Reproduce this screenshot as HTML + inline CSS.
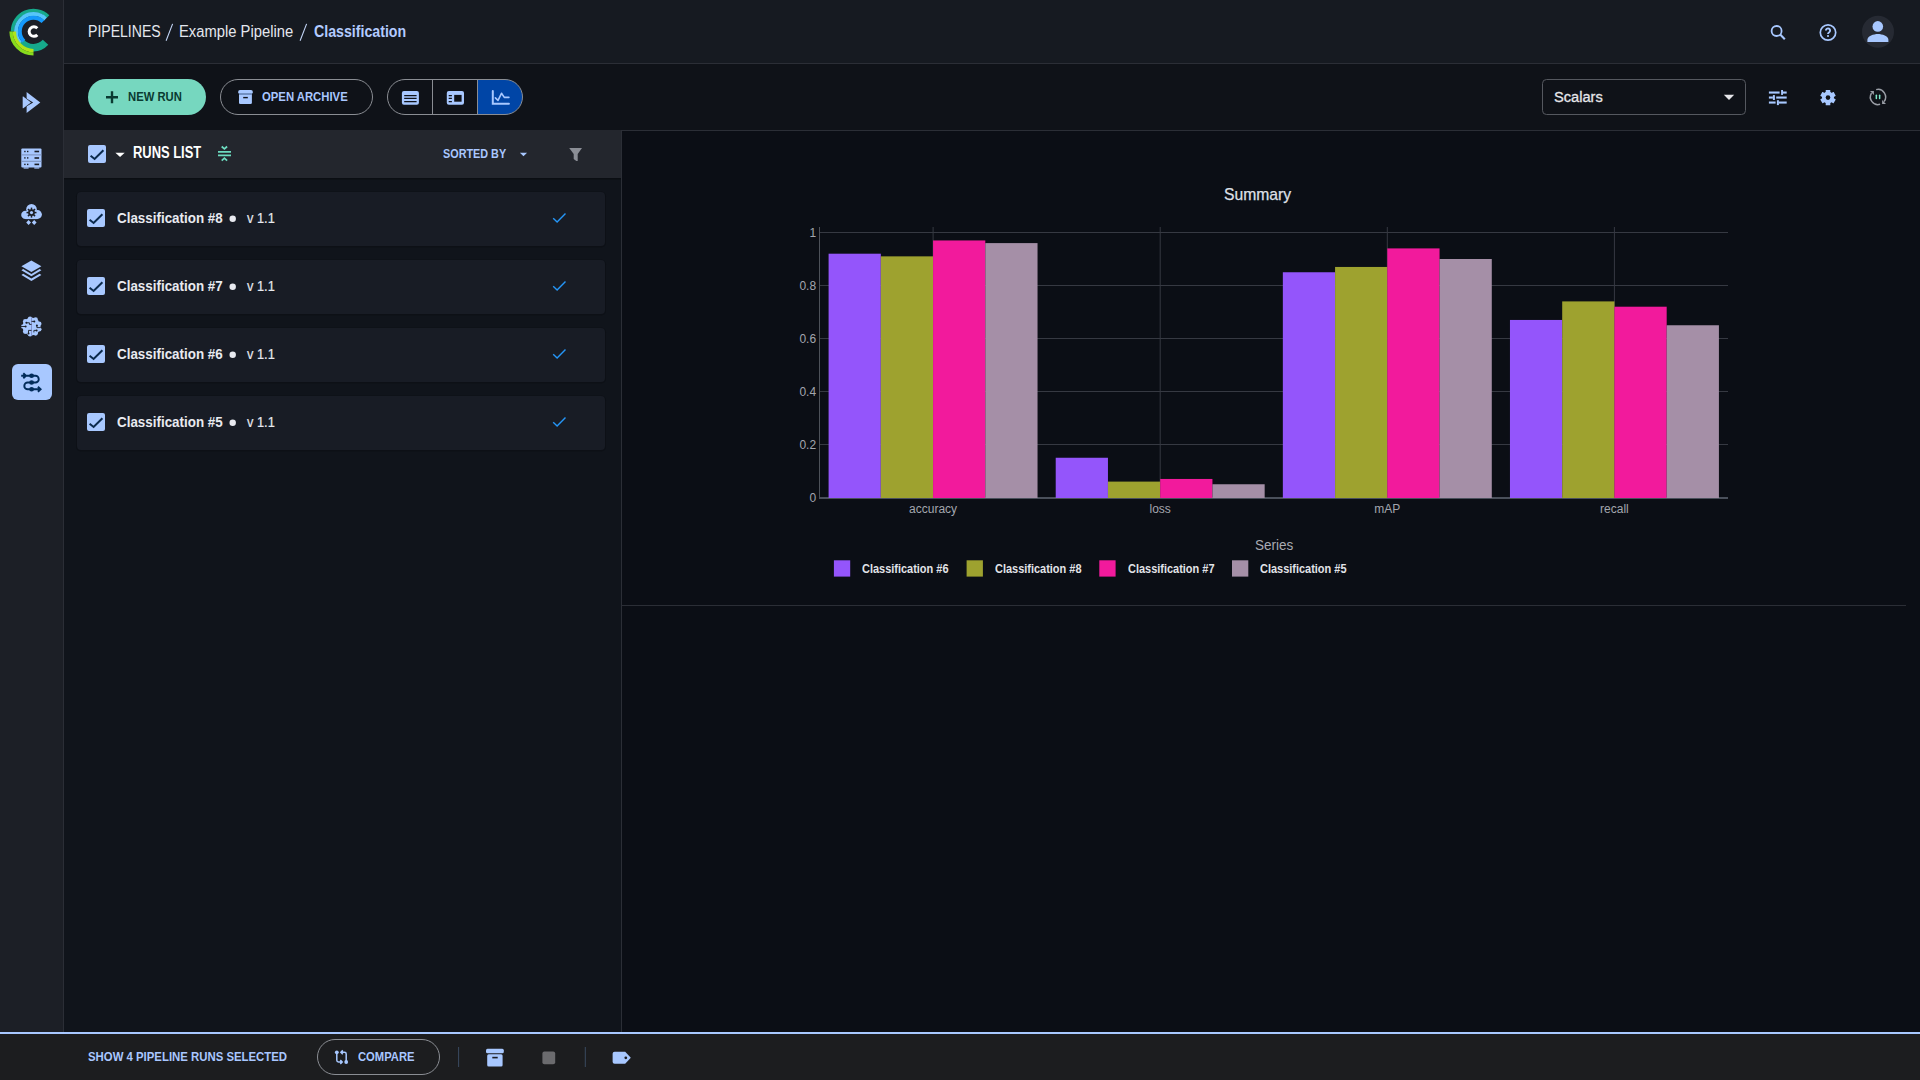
<!DOCTYPE html>
<html><head><meta charset="utf-8">
<style>
*{margin:0;padding:0;box-sizing:border-box}
html,body{width:1920px;height:1080px;overflow:hidden;background:#0b0e15;font-family:"Liberation Sans",sans-serif;}
.abs{position:absolute}
.t{position:absolute;white-space:nowrap;line-height:1;transform-origin:0 0}
#side{left:0;top:0;width:63px;height:1032px;background:#1c1f26}
#sideb{left:63px;top:0;width:1px;height:1032px;background:#2b2e36}
#top{left:64px;top:0;width:1856px;height:63px;background:#161a21}
#topb{left:64px;top:63px;width:1856px;height:1px;background:#2b2e36}
#tool{left:64px;top:64px;width:1856px;height:66px;background:#0f1218}
#runhdr{left:64px;top:130px;width:557px;height:48px;background:#23262d}
#list{left:64px;top:178px;width:557px;height:854px;background:#10141b}
#vsep{left:621px;top:130px;width:1px;height:902px;background:#2b2e36}
#rtop{left:622px;top:130px;width:1298px;height:1px;background:#2b2e36}
#plot{left:622px;top:131px;width:1298px;height:901px;background:#0b0e15}
#bline{left:0;top:1032px;width:1920px;height:2px;background:#a8c8ff}
#bottom{left:0;top:1034px;width:1920px;height:46px;background:#1c1d1f}
svg.ov{position:absolute;left:0;top:0}
</style></head><body>
<div id="side" class="abs"></div><div id="sideb" class="abs"></div>
<div id="top" class="abs"></div><div id="topb" class="abs"></div>
<div id="tool" class="abs"></div>
<div id="runhdr" class="abs"></div>
<div id="list" class="abs"></div>
<div id="vsep" class="abs"></div>
<div id="rtop" class="abs"></div>
<div id="plot" class="abs"></div>
<div id="bline" class="abs"></div>
<div id="bottom" class="abs"></div>
<svg class="ov" width="1920" height="1080" viewBox="0 0 1920 1080">
<path d="M45.54 42.34A16.2 16.2 0 0 1 21.09 41.91" stroke="#16a98b" stroke-width="7.4" fill="none"/>
<path d="M48.09 16.39A21.0 21.0 0 0 0 12.50 31.50" stroke="#16a98b" stroke-width="3.5" fill="none"/>
<path d="M45.59 18.98A17.4 17.4 0 0 0 20.37 42.92" stroke="#56c6f8" stroke-width="3.9" fill="none"/>
<path d="M42.95 21.72A13.6 13.6 0 0 0 23.88 41.12" stroke="#1599fb" stroke-width="3.9" fill="none"/>
<path d="M33.50 53.90A22.4 22.4 0 0 1 11.10 31.50" stroke="#88dc1d" stroke-width="3.4" fill="none"/>
<path d="M33.50 50.60A19.1 19.1 0 0 1 14.40 31.50" stroke="#b0e41a" stroke-width="3.3" fill="none"/>
<path d="M37.3 28.3A4.75 4.75 0 1 0 37.3 34.9" stroke="#ffffff" stroke-width="3" fill="none"/>
<path d="M26.6 92.1L40.3 102.4L26.6 112.9Z" fill="#a8c8ff"/>
<path d="M21.2 95.2L33.2 102.4L21.2 109.6Z" fill="#1c1f26"/>
<path d="M22.7 96.8Q22.7 96.2 23.3 96.6L31 102.4L23.3 108.2Q22.7 108.6 22.7 108Z" fill="#a8c8ff"/>
<rect x="21.3" y="148.4" width="20.2" height="19.2" rx="1" fill="#a8c8ff"/>
<path d="M21.3 154.9h20.2M21.3 161.3h20.2" stroke="#7a90b8" stroke-width="1"/>
<rect x="24.2" y="150.8" width="1.4" height="1.4" fill="#1c1f26"/><rect x="27" y="150.8" width="1.4" height="1.4" fill="#1c1f26"/><rect x="34.5" y="150.7" width="4.6" height="1.6" fill="#1c1f26"/>
<rect x="24.2" y="157.2" width="1.4" height="1.4" fill="#1c1f26"/><rect x="27" y="157.2" width="1.4" height="1.4" fill="#1c1f26"/><rect x="34.5" y="157.2" width="4.6" height="1.6" fill="#1c1f26"/>
<rect x="24.2" y="163.7" width="1.4" height="1.4" fill="#1c1f26"/><rect x="27" y="163.7" width="1.4" height="1.4" fill="#1c1f26"/><rect x="34.5" y="163.6" width="4.6" height="1.6" fill="#1c1f26"/>
<rect x="23.6" y="167.4" width="5" height="1.2" fill="#a8c8ff"/><rect x="34.3" y="167.4" width="5" height="1.2" fill="#a8c8ff"/>
<g fill="#a8c8ff"><circle cx="31.5" cy="209.3" r="5.3"/><circle cx="25.4" cy="214.9" r="4.2"/><circle cx="37.5" cy="214.5" r="4.4"/><rect x="25.4" y="213.5" width="12.1" height="5.6"/></g>
<g transform="translate(31.5 212.6)" fill="#1c1f26"><rect x="-0.75" y="-5" width="1.5" height="2.4" transform="rotate(0)"/><rect x="-0.75" y="-5" width="1.5" height="2.4" transform="rotate(45)"/><rect x="-0.75" y="-5" width="1.5" height="2.4" transform="rotate(90)"/><rect x="-0.75" y="-5" width="1.5" height="2.4" transform="rotate(135)"/><rect x="-0.75" y="-5" width="1.5" height="2.4" transform="rotate(180)"/><rect x="-0.75" y="-5" width="1.5" height="2.4" transform="rotate(225)"/><rect x="-0.75" y="-5" width="1.5" height="2.4" transform="rotate(270)"/><rect x="-0.75" y="-5" width="1.5" height="2.4" transform="rotate(315)"/><circle r="3.4"/><circle r="1.6" fill="#a8c8ff"/></g>
<path d="M28.6 220.1L31 222.5L28.6 224.9L26.2 222.5ZM34.2 220.1L36.6 222.5L34.2 224.9L31.8 222.5Z" fill="#a8c8ff"/>
<path d="M31.4 260.5L41.4 266.3L31.4 272.1L21.4 266.3Z" fill="#a8c8ff"/>
<path d="M21.4 270.2L23.2 269.1L31.4 273.9L39.6 269.1L41.4 270.2L31.4 276.2Z" fill="#a8c8ff"/>
<path d="M21.4 274.9L23.2 273.8L31.4 278.6L39.6 273.8L41.4 274.9L31.4 280.9Z" fill="#a8c8ff"/>
<ellipse cx="31.5" cy="326.5" rx="9" ry="9" fill="#a8c8ff"/>
<circle cx="39.21" cy="329.20" r="2.3" fill="#a8c8ff"/>
<circle cx="35.60" cy="333.34" r="2.3" fill="#a8c8ff"/>
<circle cx="30.08" cy="334.28" r="2.3" fill="#a8c8ff"/>
<circle cx="25.22" cy="331.58" r="2.3" fill="#a8c8ff"/>
<circle cx="23.30" cy="326.50" r="2.3" fill="#a8c8ff"/>
<circle cx="25.22" cy="321.42" r="2.3" fill="#a8c8ff"/>
<circle cx="30.08" cy="318.72" r="2.3" fill="#a8c8ff"/>
<circle cx="35.60" cy="319.66" r="2.3" fill="#a8c8ff"/>
<circle cx="39.21" cy="323.80" r="2.3" fill="#a8c8ff"/>
<path d="M31.5 317.2V336" stroke="#7c86c4" stroke-width="0.8"/>
<path d="M21 326.5H25.6M26.4 322.8H29.4V324.4H31.5M28.5 333.5V330.4H31.5M31.5 321.4H34.3M36.9 325.4V327.6H40.8M33.9 332.4V330.4H36.6" stroke="#1c1f26" stroke-width="0.9" fill="none"/>
<g fill="#1c1f26"><circle cx="25.6" cy="326.5" r="1"/><circle cx="26.4" cy="322.8" r="1"/><circle cx="28.5" cy="333.5" r="1"/><circle cx="34.3" cy="321.4" r="1"/><circle cx="36.9" cy="325.4" r="1"/><circle cx="36.6" cy="330.4" r="1"/></g>
<rect x="12" y="364" width="40" height="36" rx="6" fill="#a8c8ff"/>
<path d="M21.2 375.8H35.4A3.35 3.35 0 0 1 35.4 382.5H27.7A3.4 3.4 0 0 0 27.7 389.3H40.8M23.3 373.3L26 375.8L23.3 378.3M37.9 386.8L40.6 389.3L37.9 391.8" stroke="#022c5a" stroke-width="1.9" fill="none"/>
<ellipse cx="31.6" cy="375.8" rx="2.4" ry="2.2" fill="#022c5a"/><ellipse cx="31.6" cy="382.5" rx="2.4" ry="2.2" fill="#022c5a"/><ellipse cx="31.6" cy="389.3" rx="2.4" ry="2.2" fill="#022c5a"/>
<path d="M172.6 23.9L166.1 40.7M306.6 23.9L300.1 40.7" stroke="#c2d4f5" stroke-width="1.1"/>
<circle cx="1776.6" cy="31" r="5" fill="none" stroke="#a8c8ff" stroke-width="1.8"/><path d="M1780.2 34.6L1784.8 39.2" stroke="#a8c8ff" stroke-width="2.1"/>
<circle cx="1828" cy="32.5" r="7.7" fill="none" stroke="#a8c8ff" stroke-width="1.7"/>
<path d="M1825.9 30.5a2.1 2.1 0 1 1 3.3 1.7c-.8.5-1.2.9-1.2 1.8" stroke="#a8c8ff" stroke-width="1.9" fill="none"/><circle cx="1828" cy="36" r="1.1" fill="#a8c8ff"/>
<circle cx="1878" cy="31.7" r="16" fill="#262a33"/>
<circle cx="1877.8" cy="26.4" r="5.3" fill="#a8c8ff"/><path d="M1867.4 41.9v-2.2c0-3.7 6.3-5.8 10.5-5.8s10.5 2.1 10.5 5.8v2.2z" fill="#a8c8ff"/>
<rect x="88" y="79" width="118" height="36" rx="18" fill="#76d7bf"/>
<path d="M106 97.2h12M112 91.2v12" stroke="#0a3a31" stroke-width="2.4"/>
<rect x="220.5" y="79.5" width="152" height="35" rx="17.5" fill="none" stroke="#8a8d93" stroke-width="1"/>
<rect x="239" y="92" width="12.9" height="12.1" rx="1.3" fill="#a8c8ff"/><rect x="238.2" y="89.9" width="14.6" height="4.2" rx="1.8" fill="#a8c8ff"/><rect x="239" y="93.3" width="12.9" height="1.4" fill="#5b78a8"/><path d="M243.2 97.6h4.6" stroke="#0f1218" stroke-width="1.4"/>
<path d="M478 79.5H505A17.5 17.5 0 0 1 505 114.5H478Z" fill="#0045a6"/>
<rect x="387.5" y="79.5" width="135" height="35" rx="17.5" fill="none" stroke="#8a8d93" stroke-width="1"/>
<path d="M432.5 79.5v35M477.5 79.5v35" stroke="#8a8d93" stroke-width="1"/>
<rect x="401.9" y="91" width="17" height="13.8" rx="2" fill="#a8c8ff"/><path d="M404.2 95.6h12.4M404.2 98.4h12.4M404.2 101.6h12.4" stroke="#0f1218" stroke-width="1.2"/>
<rect x="446.8" y="91" width="17.2" height="13.8" rx="2" fill="#a8c8ff"/><rect x="454.2" y="94.9" width="7.4" height="6.8" fill="#0f1218"/><path d="M448.7 95.6h3.2M448.7 98.4h3.2M448.7 101.6h3.2" stroke="#0f1218" stroke-width="1.2"/>
<path d="M492.8 91v12.8h16.1" stroke="#a8c8ff" stroke-width="2" fill="none" stroke-linecap="round"/><path d="M495.4 97.9l2.6 2.5l3.5-7.1l2.8 4.1h4.6" stroke="#a8c8ff" stroke-width="1.6" fill="none" stroke-linecap="round" stroke-linejoin="round"/>
<rect x="1542.5" y="79.5" width="203" height="35" rx="4" fill="none" stroke="#55585f" stroke-width="1"/>
<path d="M1723.8 94.8h10.4l-5.2 5.2z" fill="#e6e6ea"/>
<g fill="#a8c8ff"><rect x="1768.9" y="91.5" width="10.7" height="2.1"/><rect x="1781.1" y="90" width="1.9" height="4.9"/><rect x="1782.9" y="91.5" width="3.8" height="2.1"/><rect x="1768.9" y="96.5" width="4" height="2.1"/><rect x="1772.9" y="95.1" width="2" height="4.9"/><rect x="1776.2" y="96.5" width="10.5" height="2.1"/><rect x="1768.9" y="101.5" width="6.7" height="2.1"/><rect x="1776.9" y="100.2" width="2" height="4.9"/><rect x="1778.9" y="101.5" width="7.8" height="2.1"/></g>
<g transform="translate(1828 97.6)"><rect x="-2.3" y="-7.7" width="4.6" height="3.2" rx="0.4" transform="rotate(0) " fill="#a8c8ff"/><rect x="-2.3" y="-7.7" width="4.6" height="3.2" rx="0.4" transform="rotate(60) " fill="#a8c8ff"/><rect x="-2.3" y="-7.7" width="4.6" height="3.2" rx="0.4" transform="rotate(120) " fill="#a8c8ff"/><rect x="-2.3" y="-7.7" width="4.6" height="3.2" rx="0.4" transform="rotate(180) " fill="#a8c8ff"/><rect x="-2.3" y="-7.7" width="4.6" height="3.2" rx="0.4" transform="rotate(240) " fill="#a8c8ff"/><rect x="-2.3" y="-7.7" width="4.6" height="3.2" rx="0.4" transform="rotate(300) " fill="#a8c8ff"/><circle r="6.0" fill="#a8c8ff"/><circle r="2.3" fill="#0f1218"/></g>
<path d="M1876.16 89.63A7.6 7.6 0 0 1 1884.07 101.57" stroke="#9a9ea6" stroke-width="1.5" fill="none"/>
<path d="M1880.09 104.31A7.6 7.6 0 0 1 1871.49 93.09" stroke="#9a9ea6" stroke-width="1.5" fill="none"/>
<path d="M1870 91H1873.9V94.9Z M1886 103.9H1882.1V100Z" fill="#9a9ea6"/>
<rect x="1875.6" y="94.6" width="1.5" height="4.6" rx=".7" fill="#7ee6c8"/><rect x="1878.9" y="94.6" width="1.5" height="4.6" rx=".7" fill="#7ee6c8"/>
<rect x="88" y="145" width="18" height="18" rx="2" fill="#a8c8ff"/><path d="M90.6 155.8l4 3.2l8.8-8.8" stroke="#0b2a4c" stroke-width="2" fill="none"/>
<path d="M115.4 152.7h9.3l-4.65 4.4z" fill="#ffffff"/>
<path d="M218 151.9h13M218 155.3h13M221.7 146.5l2.7 2.4l2.7-2.4M221.7 160.6l2.7-2.4l2.7 2.4" stroke="#6ddcc0" stroke-width="1.8" fill="none"/>
<path d="M519.9 152.7h7.2l-3.6 3.6z" fill="#a8c8ff"/>
<path d="M569.2 148H582L577.7 154V161.1H576.3L573.7 158.9V154Z" fill="#8b8e96"/>
<rect x="64" y="178" width="557" height="1.5" fill="#0b0e13"/>
<rect x="76" y="191.5" width="530" height="56" rx="5" fill="#0c0f15" opacity="0.8"/>
<rect x="77" y="192" width="528" height="54" rx="4" fill="#181c25"/>
<rect x="87" y="209" width="18" height="18" rx="2" fill="#a8c8ff"/><path d="M89.6 219.8l4 3.2l8.8-8.8" stroke="#0b2a4c" stroke-width="2" fill="none"/>
<circle cx="232.7" cy="218.8" r="3.2" fill="#e8eaf0"/>
<path d="M553.2 218.2l3.9 3.8l8.4-8.6" stroke="#2596f7" stroke-width="1.4" fill="none"/>
<rect x="76" y="259.5" width="530" height="56" rx="5" fill="#0c0f15" opacity="0.8"/>
<rect x="77" y="260" width="528" height="54" rx="4" fill="#181c25"/>
<rect x="87" y="277" width="18" height="18" rx="2" fill="#a8c8ff"/><path d="M89.6 287.8l4 3.2l8.8-8.8" stroke="#0b2a4c" stroke-width="2" fill="none"/>
<circle cx="232.7" cy="286.8" r="3.2" fill="#e8eaf0"/>
<path d="M553.2 286.2l3.9 3.8l8.4-8.6" stroke="#2596f7" stroke-width="1.4" fill="none"/>
<rect x="76" y="327.5" width="530" height="56" rx="5" fill="#0c0f15" opacity="0.8"/>
<rect x="77" y="328" width="528" height="54" rx="4" fill="#181c25"/>
<rect x="87" y="345" width="18" height="18" rx="2" fill="#a8c8ff"/><path d="M89.6 355.8l4 3.2l8.8-8.8" stroke="#0b2a4c" stroke-width="2" fill="none"/>
<circle cx="232.7" cy="354.8" r="3.2" fill="#e8eaf0"/>
<path d="M553.2 354.2l3.9 3.8l8.4-8.6" stroke="#2596f7" stroke-width="1.4" fill="none"/>
<rect x="76" y="395.5" width="530" height="56" rx="5" fill="#0c0f15" opacity="0.8"/>
<rect x="77" y="396" width="528" height="54" rx="4" fill="#181c25"/>
<rect x="87" y="413" width="18" height="18" rx="2" fill="#a8c8ff"/><path d="M89.6 423.8l4 3.2l8.8-8.8" stroke="#0b2a4c" stroke-width="2" fill="none"/>
<circle cx="232.7" cy="422.8" r="3.2" fill="#e8eaf0"/>
<path d="M553.2 422.2l3.9 3.8l8.4-8.6" stroke="#2596f7" stroke-width="1.4" fill="none"/>
<path d="M819.5 444.5H1728.0" stroke="#363942" stroke-width="1"/>
<path d="M819.5 391.5H1728.0" stroke="#363942" stroke-width="1"/>
<path d="M819.5 338.5H1728.0" stroke="#363942" stroke-width="1"/>
<path d="M819.5 285.5H1728.0" stroke="#363942" stroke-width="1"/>
<path d="M819.5 232.5H1728.0" stroke="#363942" stroke-width="1"/>
<path d="M933.1 227V497" stroke="#363942" stroke-width="1"/>
<path d="M1160.2 227V497" stroke="#363942" stroke-width="1"/>
<path d="M1387.3 227V497" stroke="#363942" stroke-width="1"/>
<path d="M1614.4 227V497" stroke="#363942" stroke-width="1"/>
<path d="M819.5 227V497.5" stroke="#4d5159" stroke-width="1"/>
<path d="M819.0 498H1728.0" stroke="#4a505b" stroke-width="2"/>
<rect x="828.59" y="253.70" width="52.24" height="244.30" fill="#9455fb"/>
<rect x="880.82" y="256.35" width="52.24" height="241.65" fill="#9ea22f"/>
<rect x="933.06" y="240.45" width="52.24" height="257.55" fill="#f21a9c"/>
<rect x="985.30" y="243.10" width="52.24" height="254.90" fill="#a58fa7"/>
<rect x="1055.71" y="457.75" width="52.24" height="40.25" fill="#9455fb"/>
<rect x="1107.95" y="481.60" width="52.24" height="16.40" fill="#9ea22f"/>
<rect x="1160.19" y="478.95" width="52.24" height="19.05" fill="#f21a9c"/>
<rect x="1212.43" y="484.25" width="52.24" height="13.75" fill="#a58fa7"/>
<rect x="1282.84" y="272.25" width="52.24" height="225.75" fill="#9455fb"/>
<rect x="1335.07" y="266.95" width="52.24" height="231.05" fill="#9ea22f"/>
<rect x="1387.31" y="248.40" width="52.24" height="249.60" fill="#f21a9c"/>
<rect x="1439.55" y="259.00" width="52.24" height="239.00" fill="#a58fa7"/>
<rect x="1509.96" y="319.95" width="52.24" height="178.05" fill="#9455fb"/>
<rect x="1562.20" y="301.40" width="52.24" height="196.60" fill="#9ea22f"/>
<rect x="1614.44" y="306.70" width="52.24" height="191.30" fill="#f21a9c"/>
<rect x="1666.68" y="325.25" width="52.24" height="172.75" fill="#a58fa7"/>
<path d="M622 605.5H1906" stroke="#2b2e36" stroke-width="1"/>
<rect x="833.9" y="560.3" width="16.3" height="16.3" fill="#9455fb"/>
<rect x="966.6" y="560.3" width="16.3" height="16.3" fill="#9ea22f"/>
<rect x="1099.3" y="560.3" width="16.3" height="16.3" fill="#f21a9c"/>
<rect x="1232.0" y="560.3" width="16.3" height="16.3" fill="#a58fa7"/>
<rect x="317.5" y="1039.5" width="122" height="35" rx="17.5" fill="none" stroke="#8a8d93" stroke-width="1"/>
<path d="M336.8 1052.3V1060.3Q336.8 1062 338.5 1062H342.2M340.3 1060.1l1.9 1.9l-1.9 1.9M346.2 1062V1054Q346.2 1052.3 344.5 1052.3H340.9M342.8 1050.4l-1.9 1.9l1.9 1.9" stroke="#a8c8ff" stroke-width="1.5" fill="none"/>
<circle cx="336.8" cy="1052.3" r="1.9" fill="#a8c8ff"/><circle cx="346.2" cy="1062" r="1.9" fill="#a8c8ff"/>
<path d="M458.6 1047v20M585.3 1047v20" stroke="#3a4a60" stroke-width="1"/>
<rect x="486" y="1048.7" width="17.8" height="4.6" rx="1.5" fill="#a8c8ff"/><rect x="487.2" y="1054.2" width="15.4" height="12.2" rx="1.5" fill="#a8c8ff"/><path d="M492.3 1057.6h5.4" stroke="#1c1d20" stroke-width="1.6"/>
<rect x="542.4" y="1051.4" width="12.8" height="12.8" rx="2" fill="#6b6b6e"/>
<path d="M612.6 1053.8q0-2 2-2h10.6l5.6 6l-5.6 6h-10.6q-2 0-2-2z" fill="#a8c8ff"/><circle cx="625.8" cy="1057.8" r="1.4" fill="#1c1d20"/>
</svg>
<span class="t" style="left:87.62px;top:23.56px;font-size:16px;font-weight:400;color:#e4e7ee;transform:scaleX(0.8787);">PIPELINES</span>
<span class="t" style="left:179.48px;top:23.56px;font-size:16px;font-weight:400;color:#e4e7ee;transform:scaleX(0.9232);">Example Pipeline</span>
<span class="t" style="left:314.00px;top:23.56px;font-size:16px;font-weight:700;color:#b3cbff;transform:scaleX(0.8861);">Classification</span>
<span class="t" style="left:128.40px;top:89.80px;font-size:13px;font-weight:700;color:#0a3a31;transform:scaleX(0.8669);">NEW RUN</span>
<span class="t" style="left:261.60px;top:89.80px;font-size:13px;font-weight:700;color:#a9c7ff;transform:scaleX(0.8702);">OPEN ARCHIVE</span>
<span class="t" style="left:1554.00px;top:88.78px;font-size:15.5px;font-weight:400;color:#e6e6ea;transform:scaleX(0.9435);-webkit-text-stroke:0.3px #e6e6ea;">Scalars</span>
<span class="t" style="left:133.39px;top:144.66px;font-size:16px;font-weight:700;color:#ffffff;transform:scaleX(0.8079);">RUNS LIST</span>
<span class="t" style="left:443.30px;top:147.92px;font-size:12.5px;font-weight:700;color:#a9c7ff;transform:scaleX(0.8656);">SORTED BY</span>
<span class="t" style="left:117.00px;top:209.90px;font-size:15px;font-weight:700;color:#e8eaf0;transform:scaleX(0.8929);">Classification #8</span>
<span class="t" style="left:247.00px;top:209.90px;font-size:15px;font-weight:400;color:#e8eaf0;transform:scaleX(0.8546);-webkit-text-stroke:0.2px #e8eaf0;">v 1.1</span>
<span class="t" style="left:117.00px;top:277.90px;font-size:15px;font-weight:700;color:#e8eaf0;transform:scaleX(0.8929);">Classification #7</span>
<span class="t" style="left:247.00px;top:277.90px;font-size:15px;font-weight:400;color:#e8eaf0;transform:scaleX(0.8546);-webkit-text-stroke:0.2px #e8eaf0;">v 1.1</span>
<span class="t" style="left:117.00px;top:345.90px;font-size:15px;font-weight:700;color:#e8eaf0;transform:scaleX(0.8929);">Classification #6</span>
<span class="t" style="left:247.00px;top:345.90px;font-size:15px;font-weight:400;color:#e8eaf0;transform:scaleX(0.8546);-webkit-text-stroke:0.2px #e8eaf0;">v 1.1</span>
<span class="t" style="left:117.00px;top:413.90px;font-size:15px;font-weight:700;color:#e8eaf0;transform:scaleX(0.8929);">Classification #5</span>
<span class="t" style="left:247.00px;top:413.90px;font-size:15px;font-weight:400;color:#e8eaf0;transform:scaleX(0.8546);-webkit-text-stroke:0.2px #e8eaf0;">v 1.1</span>
<span class="t" style="left:1224.00px;top:185.51px;font-size:17px;font-weight:400;color:#dfe0e8;transform:scaleX(0.9231);-webkit-text-stroke:0.25px #dfe0e8;">Summary</span>
<span class="t" style="left:1254.70px;top:538.15px;font-size:14px;font-weight:400;color:#a9abb3;transform:scaleX(0.9652);">Series</span>
<span class="t" style="left:862.30px;top:563.17px;font-size:12.2px;font-weight:700;color:#e2e3e8;transform:scaleX(0.8993);">Classification #6</span>
<span class="t" style="left:995.00px;top:563.17px;font-size:12.2px;font-weight:700;color:#e2e3e8;transform:scaleX(0.8993);">Classification #8</span>
<span class="t" style="left:1127.70px;top:563.17px;font-size:12.2px;font-weight:700;color:#e2e3e8;transform:scaleX(0.8993);">Classification #7</span>
<span class="t" style="left:1260.40px;top:563.17px;font-size:12.2px;font-weight:700;color:#e2e3e8;transform:scaleX(0.8993);">Classification #5</span>
<span class="t" style="left:87.50px;top:1050.00px;font-size:13px;font-weight:700;color:#a9c7ff;transform:scaleX(0.8748);">SHOW 4 PIPELINE RUNS SELECTED</span>
<span class="t" style="left:358.00px;top:1050.00px;font-size:13px;font-weight:700;color:#a9c7ff;transform:scaleX(0.8631);">COMPARE</span>
<span class="t" style="left:809.40px;top:227.14px;font-size:12px;color:#a3a6ae">1</span>
<span class="t" style="left:799.39px;top:280.14px;font-size:12px;color:#a3a6ae">0.8</span>
<span class="t" style="left:799.39px;top:333.14px;font-size:12px;color:#a3a6ae">0.6</span>
<span class="t" style="left:799.39px;top:386.24px;font-size:12px;color:#a3a6ae">0.4</span>
<span class="t" style="left:799.39px;top:439.24px;font-size:12px;color:#a3a6ae">0.2</span>
<span class="t" style="left:809.40px;top:492.34px;font-size:12px;color:#a3a6ae">0</span>
<span class="t" style="left:909.09px;top:503.44px;font-size:12px;color:#a3a6ae">accuracy</span>
<span class="t" style="left:1149.53px;top:503.44px;font-size:12px;color:#a3a6ae">loss</span>
<span class="t" style="left:1374.30px;top:503.44px;font-size:12px;color:#a3a6ae">mAP</span>
<span class="t" style="left:1600.06px;top:503.44px;font-size:12px;color:#a3a6ae">recall</span>
</body></html>
